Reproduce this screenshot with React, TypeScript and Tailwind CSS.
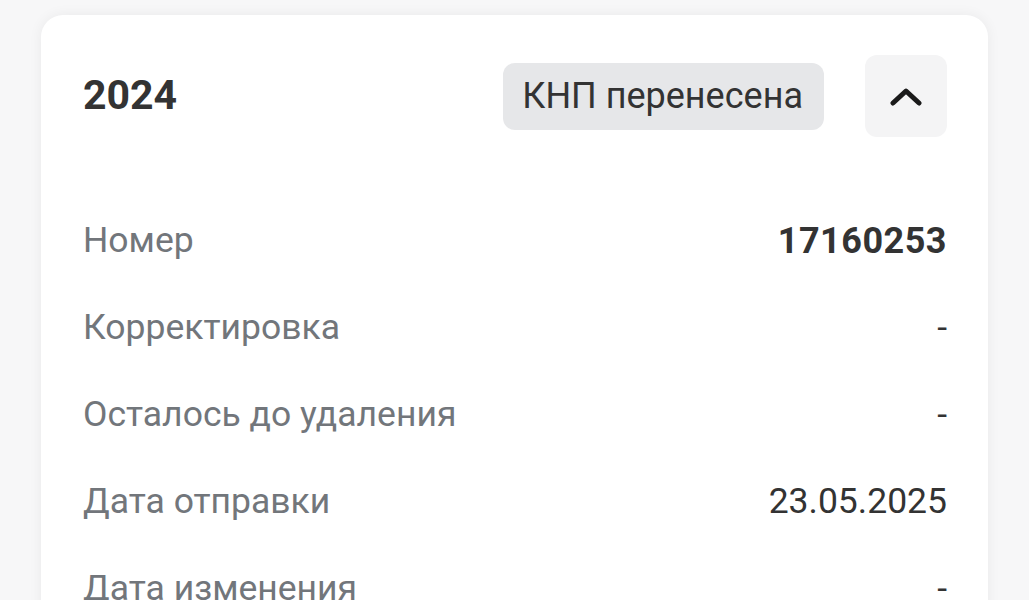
import React from "react";

interface Row {
  label: string;
  value: string;
  bold?: boolean;
}

const rows: Row[] = [
  { label: "Номер", value: "17160253", bold: true },
  { label: "Корректировка", value: "-" },
  { label: "Осталось до удаления", value: "-" },
  { label: "Дата отправки", value: "23.05.2025" },
  { label: "Дата изменения", value: "-" },
];

const App: React.FC = () => {
  return (
    <div
      className="min-h-screen bg-[#f7f7f8] px-[41px] pt-[15px] pb-10"
      style={{ fontFamily: "Roboto, 'Noto Sans', sans-serif" }}
    >
      <div className="bg-white rounded-[22px] shadow-[0_0_14px_rgba(0,0,0,0.06)] px-[41px] pt-[40px] pb-10">
        {/* header */}
        <div className="flex items-center h-[82px]">
          <h2 className="text-[41px] font-bold text-[#333333] flex-1 pl-[1px]">2024</h2>
          <span className="bg-[#e6e7e9] text-[#333333] text-[36px] leading-none rounded-[12px] h-[67px] pl-[19px] pr-[21px] flex items-center">
            КНП перенесена
          </span>
          <button className="ml-[41px] w-[82px] h-[82px] rounded-[12px] bg-[#f4f4f5] flex items-center justify-center">
            <svg width="32" height="20" viewBox="0 0 32 20" fill="none">
              <path
                d="M3 17 L16 5 L29 17"
                stroke="#1a1a1a"
                strokeWidth="5"
                strokeLinecap="round"
                strokeLinejoin="round"
              />
            </svg>
          </button>
        </div>

        {/* details */}
        <div className="mt-[60px]">
          {rows.map((row) => (
            <div key={row.label} className="flex items-center justify-between h-[87px] text-[35.5px]">
              <span className="text-[#72767b] pl-[1px]">{row.label}</span>
              <span
                className={
                  row.bold
                    ? "font-bold text-[36px] tracking-[0.5px] text-[#333333]"
                    : "text-[#333333]"
                }
              >
                {row.value}
              </span>
            </div>
          ))}
        </div>
      </div>
    </div>
  );
};

export default App;
